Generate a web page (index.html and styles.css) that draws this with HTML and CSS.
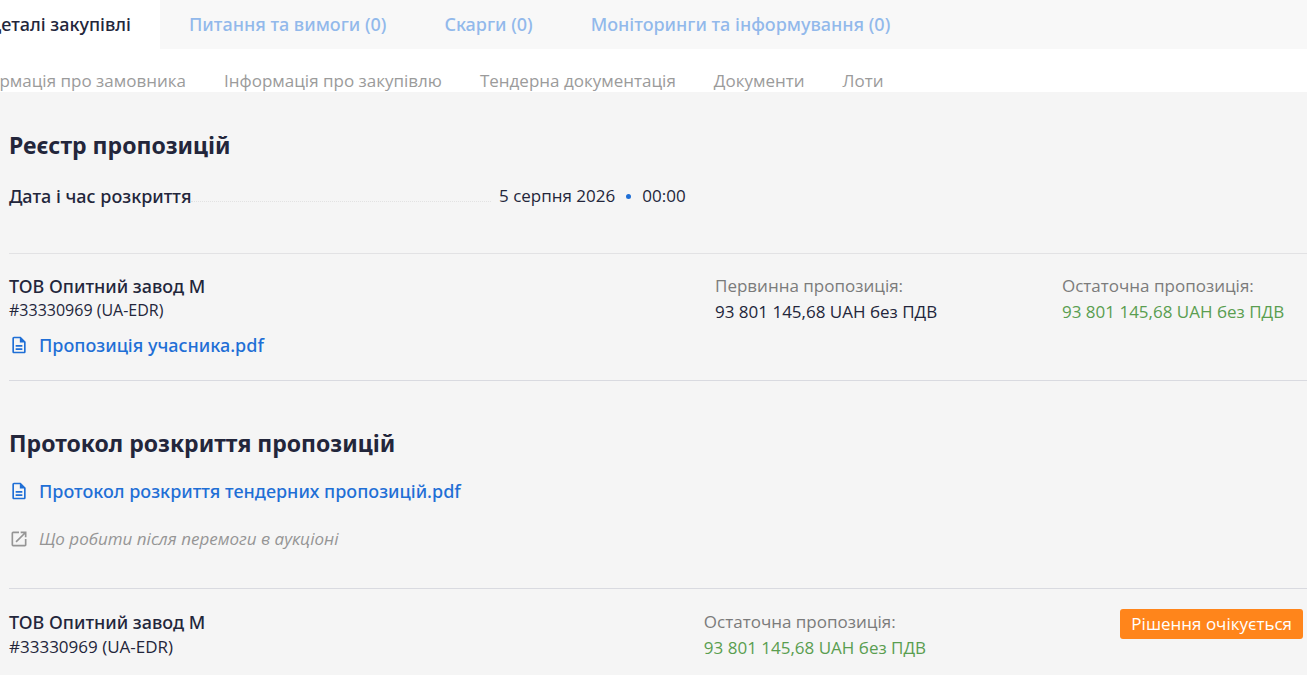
FILE: index.html
```html
<!DOCTYPE html>
<html lang="uk">
<head>
<meta charset="utf-8">
<meta name="viewport" content="width=device-width, initial-scale=1">
<title>Реєстр пропозицій</title>
<link rel="stylesheet" href="styles.css">
</head>
<body>
<svg class="sprite" aria-hidden="true">
  <symbol id="doc" viewBox="0 0 24 24"><path d="M14 2H6c-1.100 0-2 .9-2 2v16c0 1.100.9 2 2 2h12c1.100 0 2-.9 2-2V8l-6-6zM6 20V4h7v5h5v11H6zM8 16h8v2H8zM8 12h8v2H8z"/></symbol>
  <symbol id="open" viewBox="0 0 24 24"><path d="M19 19H5V5h7V3H5a2 2 0 0 0-2 2v14a2 2 0 0 0 2 2h14c1.100 0 2-.9 2-2v-7h-2v7zM14 3v2h3.590l-9.830 9.830 1.410 1.410L19 6.410V10h2V3h-7z"/></symbol>
</svg>
<nav class="tabs" aria-label="Розділи закупівлі">
  <a class="tab tab-active" href="#details" aria-current="page">Деталі закупівлі</a>
  <a class="tab" href="#questions">Питання та вимоги (0)</a>
  <a class="tab" href="#complaints">Скарги (0)</a>
  <a class="tab" href="#monitoring">Моніторинги та інформування (0)</a>
</nav>
<nav class="subnav" aria-label="Деталі закупівлі">
  <a class="subnav-link subnav-first" href="#buyer">Інформація про замовника</a>
  <a class="subnav-link" href="#info">Інформація про закупівлю</a>
  <a class="subnav-link" href="#docs">Тендерна документація</a>
  <a class="subnav-link" href="#files">Документи</a>
  <a class="subnav-link" href="#lots">Лоти</a>
</nav>
<main class="content">
  <section class="register">
    <h2 class="title">Реєстр пропозицій</h2>
    <dl class="opening">
      <dt class="opening-label">Дата і час розкриття</dt>
      <dd class="opening-value"><span>5 серпня 2026</span><span class="dot"></span><span>00:00</span></dd>
    </dl>
    <article class="bid">
      <div>
        <h3 class="name">ТОВ Опитний завод М</h3>
        <p class="code code-small">#33330969 (UA-EDR)</p>
        <a class="file bid-file" href="#bid-pdf"><svg class="icon"><use href="#doc"/></svg>Пропозиція учасника.pdf</a>
      </div>
      <div>
        <p class="label">Первинна пропозиція:</p>
        <p class="price">93 801 145,68 UAH без ПДВ</p>
      </div>
      <div>
        <p class="label">Остаточна пропозиція:</p>
        <p class="price price-final">93 801 145,68 UAH без ПДВ</p>
      </div>
    </article>
  </section>
  <section class="protocol">
    <h2 class="title">Протокол розкриття пропозицій</h2>
    <a class="file" href="#protocol-pdf"><svg class="icon"><use href="#doc"/></svg>Протокол розкриття тендерних пропозицій.pdf</a>
    <a class="file help" href="#help"><svg class="icon"><use href="#open"/></svg>Що робити після перемоги в аукціоні</a>
    <article class="award">
      <div>
        <h3 class="name">ТОВ Опитний завод М</h3>
        <p class="code">#33330969 (UA-EDR)</p>
      </div>
      <div>
        <p class="label">Остаточна пропозиція:</p>
        <p class="price price-final">93 801 145,68 UAH без ПДВ</p>
      </div>
      <span class="badge">Рішення очікується</span>
    </article>
  </section>
</main>
</body>
</html>
```
FILE: styles.css
```css
* { box-sizing: border-box; }
html { background: #f5f5f5; }
body {
  margin: 0;
  overflow-x: hidden;
  font: 17px/26px "Open Sans", "Noto Sans", sans-serif;
  color: #23263b;
}
h2, h3, p, dl, dd { margin: 0; }
a { text-decoration: none; }
.sprite { display: none; }

.tab, .title, .opening-label, .name, .file {
  font-family: "Noto Sans", "Open Sans", sans-serif;
  font-size: 18px;
  font-weight: 500;
}

.tabs {
  display: flex;
  background: #f8f8f8;
  overflow: hidden;
  white-space: nowrap;
}
.tab {
  flex: none;
  padding: 11px 29px 12px;
  color: #92b9eb;
}
.tab-active {
  display: flex;
  justify-content: flex-end;
  width: 160px;
  background: #fff;
  color: #23263b;
}
.subnav {
  display: flex;
  gap: 38px;
  padding-top: 20px;
  background: #fff;
  overflow: hidden;
  white-space: nowrap;
  line-height: 23px;
}
.subnav-link { flex: none; color: #9b9b9b; }
.subnav-first {
  display: flex;
  justify-content: flex-end;
  width: 186px;
}

.content { padding: 37px 0 16px 9px; }
.title { font-size: 23px; line-height: 32px; font-weight: 700; }
.opening {
  display: flex;
  margin: 22px 0 44px;
}
.opening-label {
  display: flex;
  flex: none;
  width: 482px;
}
.opening-label::after {
  content: "";
  flex: 1;
  height: 18px;
  border-bottom: 1px dotted #e2e2e2;
}
.opening-value {
  display: flex;
  align-items: center;
  gap: 11px;
  margin-left: 8px;
}
.dot {
  width: 5px;
  height: 5px;
  border-radius: 50%;
  background: #1f6fd6;
}
.bid {
  display: grid;
  grid-template-columns: 706fr 347fr 245fr;
  padding: 19px 0 23px;
  border-top: 1px solid #e2e2e4;
  border-bottom: 1px solid #d9dae0;
}
.name { line-height: 26px; }
.code { line-height: 24px; }
.code-small { font-size: 16px; line-height: 23px; }
.label { color: #7b7b7b; }
.price-final { color: #5a9e50; }
.file {
  display: flex;
  align-items: center;
  gap: 10px;
  width: fit-content;
  line-height: 24px;
  color: #1f6fd6;
}
.icon { flex: none; width: 20px; height: 20px; fill: currentColor; }
.bid-file { margin-top: 11px; }
.protocol { padding-top: 46px; }
.protocol .title { margin-bottom: 20px; }
.help {
  margin: 24px 0 37px;
  font-family: "Open Sans", "Noto Sans", sans-serif;
  font-size: 17px;
  font-weight: 400;
  font-style: italic;
  color: #959595;
}
.award {
  display: grid;
  grid-template-columns: 694fr 416fr auto;
  padding: 20px 4px 0 0;
  border-top: 1px solid #d9dae0;
}
.badge {
  align-self: start;
  padding: 2px 11px;
  border-radius: 3px;
  background: #ff851b;
  color: #fff;
}
```
